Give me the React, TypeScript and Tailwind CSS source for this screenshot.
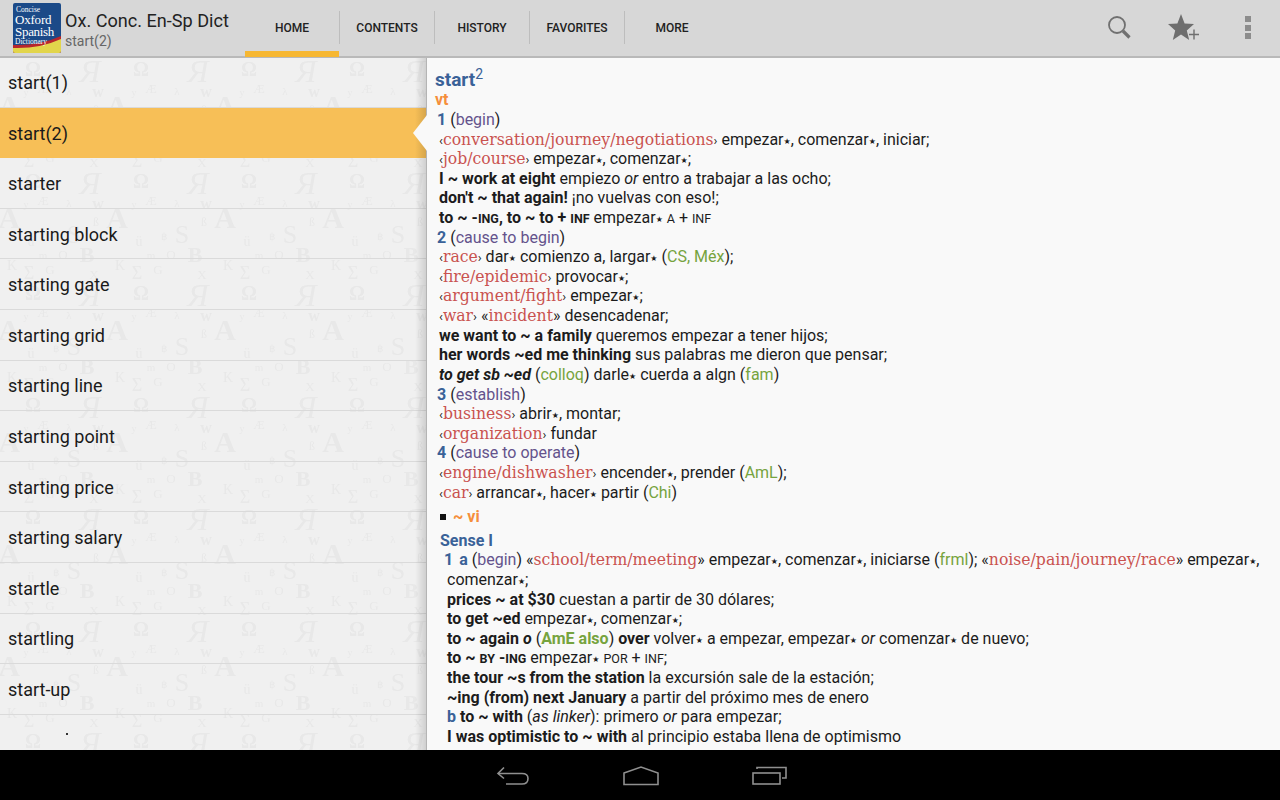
const tabs = ["HOME", "CONTENTS", "HISTORY", "FAVORITES", "MORE"];

const words = [
  "start(1)",
  "start(2)",
  "starter",
  "starting block",
  "starting gate",
  "starting grid",
  "starting line",
  "starting point",
  "starting price",
  "starting salary",
  "startle",
  "startling",
  "start-up",
];

// faint letters of the wallpaper behind the word list: [glyph, x, y, size, weight, style]
const glyphs: [string, number, number, number, number, string][] = [
  ["Ω", 33, 11, 20, 700, "normal"],
  ["Я", 90, 13, 32, 400, "italic"],
  ["Æ", 43, 30, 13, 400, "normal"],
  ["λ", 69, 33, 11, 400, "normal"],
  ["w", 98, 33, 16, 700, "normal"],
  ["y", 26, 34, 10, 400, "normal"],
  ["A", 9, 47, 30, 700, "normal"],
  ["A", 117, 47, 30, 700, "normal"],
  ["ß", 96, 52, 12, 400, "normal"],
  ["S", 74, 64, 26, 400, "normal"],
  ["฿", 56, 66, 10, 400, "normal"],
  ["ü", 31, 71, 14, 400, "normal"],
  ["B", 87, 84, 22, 700, "normal"],
  ["O", 63, 84, 13, 400, "normal"],
  ["m", 43, 85, 11, 400, "normal"],
  ["K", 12, 95, 14, 400, "normal"],
  ["Σ", 29, 103, 18, 400, "normal"],
  ["G", 50, 99, 13, 400, "normal"],
  ["X", 94, 104, 13, 400, "normal"],
];

const Wallpaper = () => (
  <svg className="absolute left-0 top-0" width="427" height="692">
    <defs>
      <pattern id="letters" width="108" height="112" patternUnits="userSpaceOnUse">
        {glyphs.map(([glyph, x, y, size, weight, style]) => (
          <text
            key={`${glyph}-${x}`}
            x={x}
            y={y}
            fontSize={size}
            fontWeight={weight}
            fontStyle={style}
            fontFamily="Liberation Serif, serif"
            fill="#e8e8e8"
            textAnchor="middle"
            dominantBaseline="central"
          >
            {glyph}
          </text>
        ))}
      </pattern>
    </defs>
    <rect width="427" height="692" fill="url(#letters)" />
  </svg>
);

const Logo = () => (
  <div className="relative h-[50px] w-[48px] shrink-0 overflow-hidden rounded-[2px] bg-[#1b4a88]">
    <svg className="absolute bottom-0 left-0" width="48" height="50" viewBox="0 0 48 50">
      <path d="M0 42 Q26 43 48 33 L48 50 L0 50 Z" fill="#b7262c" />
      <path d="M0 45 Q26 46 48 36 L48 50 L0 50 Z" fill="#e2d54b" />
    </svg>
    <div className="relative flex flex-col pl-[2px] pt-[2px] text-white [font-family:'Liberation_Serif',serif]">
      <span className="pl-[1px] text-[7.5px] leading-[9px]">Concise</span>
      <span className="text-[13px] leading-[12px] tracking-[-0.2px]">Oxford</span>
      <span className="text-[13px] leading-[12px] tracking-[-0.3px]">Spanish</span>
      <span className="text-[7.5px] leading-[8px]">Dictionary</span>
    </div>
  </div>
);

const Header = () => (
  <header className="relative flex h-[58px] shrink-0 items-start border-b-2 border-[#b9b9b9] bg-[#d7d7d7]">
    <div className="flex w-[245px] shrink-0 items-start pl-[13px] pt-[3px]">
      <Logo />
      <div className="ml-[4px] mt-[7px] flex flex-col">
        <span className="text-[18.1px] leading-[22px] text-[#222222]">Ox. Conc. En-Sp Dict</span>
        <span className="text-[14px] leading-[18px] text-[#666666]">start(2)</span>
      </div>
    </div>
    <nav className="flex h-[57px]">
      {tabs.map((tab, i) => (
        <div key={tab} className="relative flex h-full w-[95px] justify-center pr-[1px] pt-[20px]">
          <span className="text-[12px] font-medium leading-[16px] text-[#222222]">{tab}</span>
          {i < 4 && <div className="absolute right-0 top-[11px] h-[33px] w-px bg-[#bdbdbd]" />}
          {i === 0 && <div className="absolute bottom-0 left-0 h-[6px] w-[94px] bg-[#f6b732]" />}
        </div>
      ))}
    </nav>
    <div className="ml-auto flex items-start pt-[14px]">
      <svg width="26" height="26" viewBox="0 0 26 26" fill="none" className="mr-[34px]">
        <circle cx="10" cy="11" r="8" stroke="#707070" strokeWidth="1.8" />
        <path d="M16 17 L22.5 23.5" stroke="#707070" strokeWidth="3.2" />
      </svg>
      <svg width="34" height="28" viewBox="0 0 34 28" className="mr-[44px]">
        <path d="M14 0 L17.6 9.6 L27 10 L19.8 16.4 L22.2 26 L14 20.6 L5.8 26 L8.2 16.4 L1 10 L10.4 9.6 Z" fill="#6e6e6e" />
        <path d="M27 15.5 V25.5 M22 20.5 H32" stroke="#6e6e6e" strokeWidth="1.4" />
      </svg>
      <div className="mr-[29px] mt-[2px] flex flex-col gap-[2.5px]">
        <div className="h-[6px] w-[6px] bg-[#8c8c8c]" />
        <div className="h-[6px] w-[6px] bg-[#8c8c8c]" />
        <div className="h-[6px] w-[6px] bg-[#8c8c8c]" />
      </div>
    </div>
  </header>
);

const WordList = () => (
  <aside className="relative w-[427px] shrink-0 overflow-hidden bg-[#f0f0f0]">
    <Wallpaper />
    <div className="relative -mt-[1px]">
      {words.map((word, i) => (
        <div
          key={word}
          className={
            i === 1
              ? "flex h-[50.6px] items-center bg-[#f7bf57] pl-[8px] pt-[1px] text-[18px] text-[#1a1a1a]"
              : "flex h-[50.6px] items-center border-b border-[#dadada] pl-[8px] pt-[1px] text-[18px] text-[#1a1a1a]"
          }
        >
          {word}
        </div>
      ))}
      <div className="ml-[66px] mt-[18px] h-[2px] w-[2px] bg-[#333333]" />
    </div>
    {/* shadow the entry panel throws on the list */}
    <div className="absolute inset-y-0 right-0 w-[12px] bg-gradient-to-r from-transparent to-[#000000]/15" />
    <div className="absolute inset-y-0 right-0 w-px bg-[#b4b4b4]" />
    <svg className="absolute right-0 top-[57px]" width="14" height="36" viewBox="0 0 14 36">
      <path d="M14 0 L0 18 L14 36 Z" fill="#f9f9f9" />
    </svg>
  </aside>
);

type Kids = { children: React.ReactNode };

const Star = () => <span className="align-[1px] text-[8px] leading-none [font-family:'DejaVu_Sans',sans-serif]">★</span>;
const B = ({ children }: Kids) => <b className="font-bold">{children}</b>;
const I = ({ children }: Kids) => <i>{children}</i>;
const Sc = ({ children }: Kids) => <span className="text-[12.5px] leading-none">{children}</span>;
const Num = ({ children }: Kids) => <b className="font-bold text-[#3a6298]">{children}</b>;
const Gl = ({ children }: Kids) => <span className="text-[#64538c]">{children}</span>;
const Lb = ({ children }: Kids) => <span className="text-[#76a33e]">{children}</span>;
const Col = ({ children }: Kids) => (
  <span className="text-[17.4px] leading-none text-[#c9524f] [font-family:'DejaVu_Serif_Condensed','Liberation_Serif',serif]">{children}</span>
);
const Ang = ({ children }: Kids) => (
  <>
    <span className="text-[13px] leading-none">‹</span>
    <Col>{children}</Col>
    <span className="text-[13px] leading-none">›</span>
  </>
);
const A = ({ children }: Kids) => <div className="h-[19.62px] whitespace-nowrap pl-[12px]">{children}</div>;
const N = ({ children }: Kids) => <div className="h-[19.62px] whitespace-nowrap pl-[10px]">{children}</div>;
const C = ({ children }: Kids) => <div className="h-[19.62px] whitespace-nowrap pl-[20px]">{children}</div>;

const Entry = () => (
  <main className="min-h-0 min-w-0 flex-1 overflow-hidden bg-[#f9f9f9] pt-[11px] text-[16px] leading-[19.62px] text-[#1c1c1c]">
    <div className="h-[21px] pl-[8px] text-[19px] font-bold leading-[22px] text-[#3a6298]">
      start<sup className="text-[14px] font-normal leading-none">2</sup>
    </div>
    <div className="h-[20px] pl-[8px] font-bold leading-[19px] text-[#f58f3c]">vt</div>
    <N><Num>1</Num> (<Gl>begin</Gl>)</N>
    <A><Ang>conversation/journey/negotiations</Ang> empezar<Star />, comenzar<Star />, iniciar;</A>
    <A><Ang>job/course</Ang> empezar<Star />, comenzar<Star />;</A>
    <A><B>I ~ work at eight</B> empiezo <I>or</I> entro a trabajar a las ocho;</A>
    <A><B>don't ~ that again!</B> ¡no vuelvas con eso!;</A>
    <A><B>to ~ -<Sc>ING</Sc>, to ~ to + <Sc>INF</Sc></B> empezar<Star /> <Sc>A</Sc> + <Sc>INF</Sc></A>
    <N><Num>2</Num> (<Gl>cause to begin</Gl>)</N>
    <A><Ang>race</Ang> dar<Star /> comienzo a, largar<Star /> (<Lb>CS, Méx</Lb>);</A>
    <A><Ang>fire/epidemic</Ang> provocar<Star />;</A>
    <A><Ang>argument/fight</Ang> empezar<Star />;</A>
    <A><Ang>war</Ang> «<Col>incident</Col>» desencadenar;</A>
    <A><B>we want to ~ a family</B> queremos empezar a tener hijos;</A>
    <A><B>her words ~ed me thinking</B> sus palabras me dieron que pensar;</A>
    <A><b className="font-bold italic">to get sb ~ed</b> (<Lb>colloq</Lb>) darle<Star /> cuerda a algn (<Lb>fam</Lb>)</A>
    <N><Num>3</Num> (<Gl>establish</Gl>)</N>
    <A><Ang>business</Ang> abrir<Star />, montar;</A>
    <A><Ang>organization</Ang> fundar</A>
    <N><Num>4</Num> (<Gl>cause to operate</Gl>)</N>
    <A><Ang>engine/dishwasher</Ang> encender<Star />, prender (<Lb>AmL</Lb>);</A>
    <A><Ang>car</Ang> arrancar<Star />, hacer<Star /> partir (<Lb>Chi</Lb>)</A>
    <div className="flex items-center pl-[13px] pt-[4.5px] font-bold text-[#f58f3c]">
      <span className="mr-[7px] h-[6px] w-[6px] bg-[#111111]" />~ vi
    </div>
    <div className="pl-[13px] pt-[4.5px] font-bold text-[#3a6298]">Sense I</div>
    <div className="h-[19.62px] whitespace-nowrap pl-[17px]">
      <Num>1</Num>
      <span className="ml-[6px]"><Num>a</Num></span> (<Gl>begin</Gl>) «<Col>school/term/meeting</Col>» empezar<Star />, comenzar<Star />, iniciarse (<Lb>frml</Lb>); «<Col>noise/pain/journey/race</Col>» empezar<Star />,
    </div>
    <C>comenzar<Star />;</C>
    <C><B>prices ~ at $30</B> cuestan a partir de 30 dólares;</C>
    <C><B>to get ~ed</B> empezar<Star />, comenzar<Star />;</C>
    <C><B>to ~ again <I>o</I></B> (<b className="font-bold text-[#76a33e]">AmE also</b>) <B>over</B> volver<Star /> a empezar, empezar<Star /> <I>or</I> comenzar<Star /> de nuevo;</C>
    <C><B>to ~ <Sc>BY</Sc> -<Sc>ING</Sc></B> empezar<Star /> <Sc>POR</Sc> + <Sc>INF</Sc>;</C>
    <C><B>the tour ~s from the station</B> la excursión sale de la estación;</C>
    <C><B>~ing (from) next January</B> a partir del próximo mes de enero</C>
    <C><Num>b</Num> <B>to ~ with</B> (<I>as linker</I>): primero <I>or</I> para empezar;</C>
    <C><B>I was optimistic to ~ with</B> al principio estaba llena de optimismo</C>
    <C><B>to begin with</B> para empezar</C>
  </main>
);

const NavBar = () => (
  <footer className="flex h-[50px] shrink-0 items-center justify-center gap-[93px] bg-black pl-[2px] pt-[2px]">
    <svg width="34" height="20" viewBox="0 0 34 20" fill="none" stroke="#8f8f8f" strokeWidth="1.6">
      <path d="M8 1.5 L2 7.5 L8 12.5" />
      <path d="M2 7.5 H26 Q32 7.5 32 12.5 Q32 18 26 18 H10" />
    </svg>
    <svg width="36" height="20" viewBox="0 0 36 20" fill="none" stroke="#8f8f8f" strokeWidth="1.6">
      <path d="M1 7 L18 1 L35 7 V18.5 H1 Z" />
    </svg>
    <svg width="35" height="20" viewBox="0 0 35 20" fill="none" stroke="#8f8f8f" strokeWidth="1.6">
      <rect x="1" y="7" width="27" height="11" />
      <path d="M5 3 V1.5 H34 V12 H30" />
    </svg>
  </footer>
);

export default function App() {
  return (
    <div className="flex h-[800px] w-[1280px] flex-col overflow-hidden [font-family:Roboto,sans-serif]">
      <Header />
      <div className="flex min-h-0 flex-1">
        <WordList />
        <Entry />
      </div>
      <NavBar />
    </div>
  );
}
